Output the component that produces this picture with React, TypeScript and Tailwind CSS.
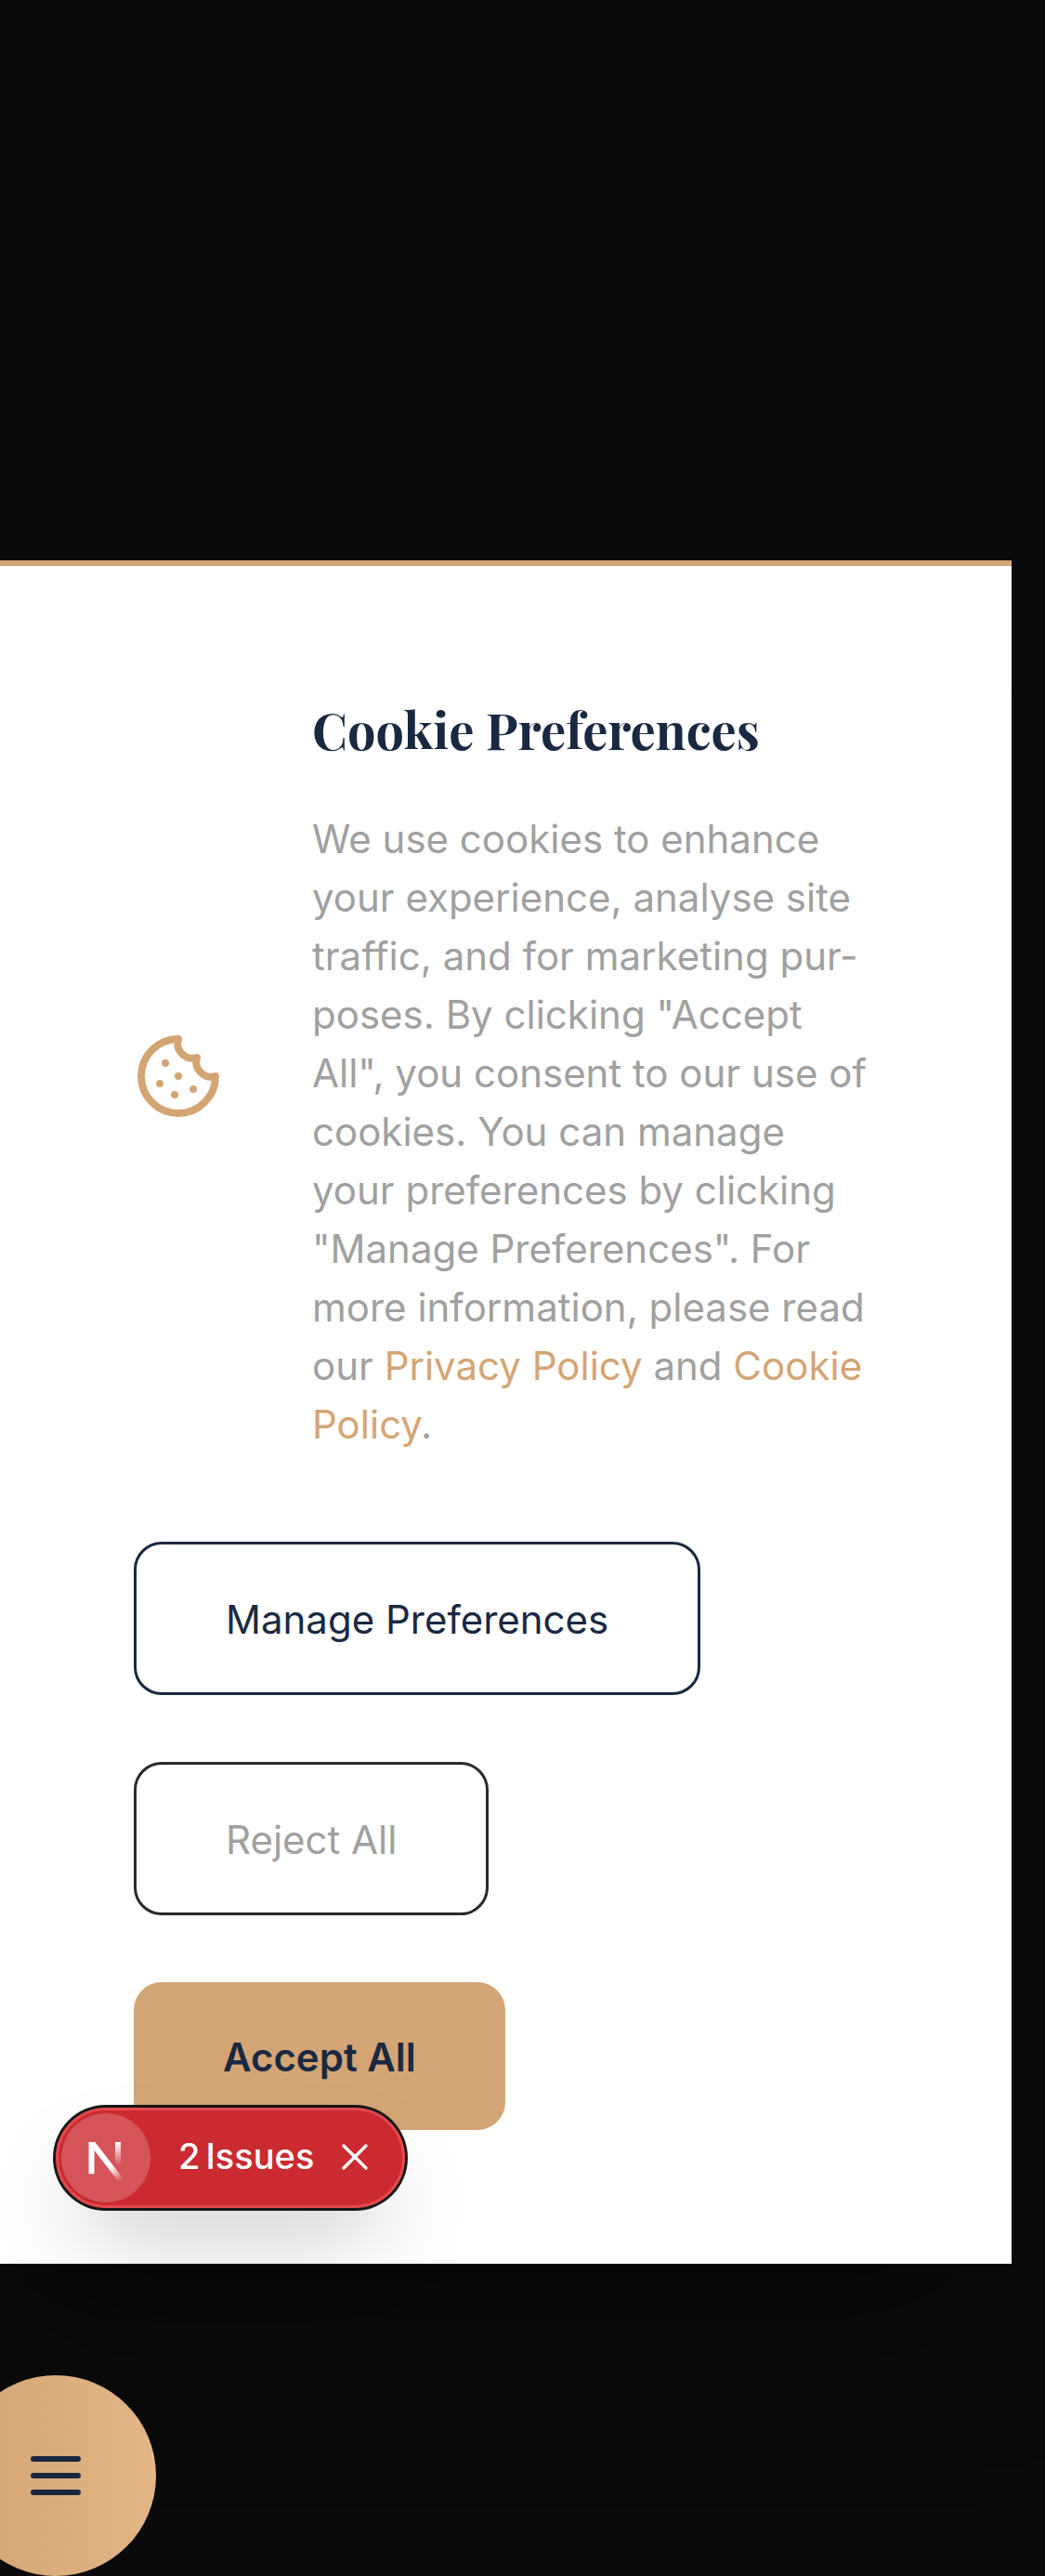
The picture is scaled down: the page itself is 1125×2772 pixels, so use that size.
import React from "react";

function CookieIcon() {
  return (
    <svg className="size-24 shrink-0 text-[#d4a574]" viewBox="0 0 24 24" fill="none" stroke="currentColor" strokeWidth="2" strokeLinecap="round" strokeLinejoin="round">
      <path d="M12 2a10 10 0 1 0 10 10 4 4 0 0 1-5-5 4 4 0 0 1-5-5" />
      <path d="M8.5 8.5v.01" />
      <path d="M16 15.5v.01" />
      <path d="M12 12v.01" />
      <path d="M11 17v.01" />
      <path d="M7 14v.01" />
    </svg>
  );
}

function NextMark() {
  return (
    <svg className="size-24" viewBox="0 0 32 32" fill="none">
      <defs>
        <linearGradient id="diag" x1="9.8" y1="9.6" x2="13.4" y2="14.6" gradientUnits="userSpaceOnUse">
          <stop stopColor="#fff" />
          <stop offset="1" stopColor="#fff" stopOpacity="0" />
        </linearGradient>
        <linearGradient id="stem" x1="11.8" y1="1" x2="11.8" y2="9.4" gradientUnits="userSpaceOnUse">
          <stop stopColor="#fff" />
          <stop offset="1" stopColor="#fff" stopOpacity="0" />
        </linearGradient>
        <clipPath id="nclip">
          <rect x="0" y="1" width="16" height="16" />
        </clipPath>
      </defs>
      <g transform="translate(8.5 9.35)" clipPath="url(#nclip)">
        <path d="M13.3 15.2 L2.34 1 V12.4" stroke="url(#diag)" strokeWidth="2" />
        <path d="M11.825 1 V12.6" stroke="url(#stem)" strokeWidth="2" />
      </g>
    </svg>
  );
}

function IssuesBadge() {
  return (
    <div className="absolute left-[60px] top-[2268px] flex h-[108px] w-[376px] items-center rounded-full border-[3px] border-[#e5484d] bg-[#ca2a30] pl-[3px] text-white shadow-[0_0_0_3px_#171717,0_48px_96px_-24px_rgba(0,0,0,0.26)]">
      <div className="size-24 shrink-0 rounded-full bg-white/20">
        <NextMark />
      </div>
      <div className="ml-[30px] flex w-[150px] items-center gap-[6px] whitespace-nowrap pb-[4px] text-[38px] font-medium leading-none">
        <span>2</span>
        <span>Issues</span>
      </div>
      <svg className="mb-[2px] ml-[25px] size-[30px]" viewBox="0 0 30 30" fill="none" stroke="currentColor" strokeWidth="3.4" strokeLinecap="round">
        <path d="M3 3L27 27M27 3L3 27" />
      </svg>
    </div>
  );
}

export default function App() {
  return (
    <div className="relative flex h-[2772px] w-[1125px] flex-col overflow-hidden bg-[#0a0a0a] pt-[603px] font-['Inter',sans-serif] text-[42px] leading-[63px]">
      <section className="w-[1089px] border-t-[6px] border-[#d4a574] bg-white p-36 shadow-[0_75px_150px_-36px_rgba(0,0,0,0.5)]">
        <div className="flex items-center gap-24">
          <CookieIcon />
          <div className="w-[609px] whitespace-nowrap">
            <h2 className="mb-[52px] font-['Playfair_Display','Liberation_Serif',serif] text-[54px] font-bold leading-[65px] text-[#1a2942]">
              Cookie Preferences
            </h2>
            <p className="-mb-px pt-px text-[#a0a0a0]">
              We use cookies to enhance<br />
              your experience, analyse site<br />
              traffic, and for marketing pur-<br />
              poses. By clicking "Accept<br />
              All", you consent to our use of<br />
              cookies. You can manage<br />
              your preferences by clicking<br />
              "Manage Preferences". For<br />
              more information, please read<br />
              our <a className="text-[#d4a574]">Privacy Policy</a> and <a className="text-[#d4a574]">Cookie<br />Policy</a>.
            </p>
          </div>
        </div>
        <div className="mt-24 flex flex-col items-start gap-[72px]">
          <button className="rounded-[30px] border-[3px] border-[#1a2942] px-24 pb-[47px] pt-[49px] text-[#1a2942]">Manage Preferences</button>
          <button className="rounded-[30px] border-[3px] border-[#2a2a2a] px-24 pb-[47px] pt-[49px] text-[#a0a0a0]">Reject All</button>
          <button className="rounded-[30px] bg-[#d4a574] px-24 pb-[47px] pt-[49px] font-semibold text-[#1a2942]">Accept All</button>
        </div>
      </section>
      <button className="-ml-12 mt-[120px] flex size-[216px] shrink-0 items-center justify-center rounded-full bg-linear-to-r from-[#d4a574] to-[#e4b585] text-[#1a2942]">
        <svg className="size-[72px]" viewBox="0 0 24 24" fill="none" stroke="currentColor" strokeWidth="2" strokeLinecap="round">
          <path d="M4 6h16M4 12h16M4 18h16" />
        </svg>
      </button>
      <IssuesBadge />
    </div>
  );
}
